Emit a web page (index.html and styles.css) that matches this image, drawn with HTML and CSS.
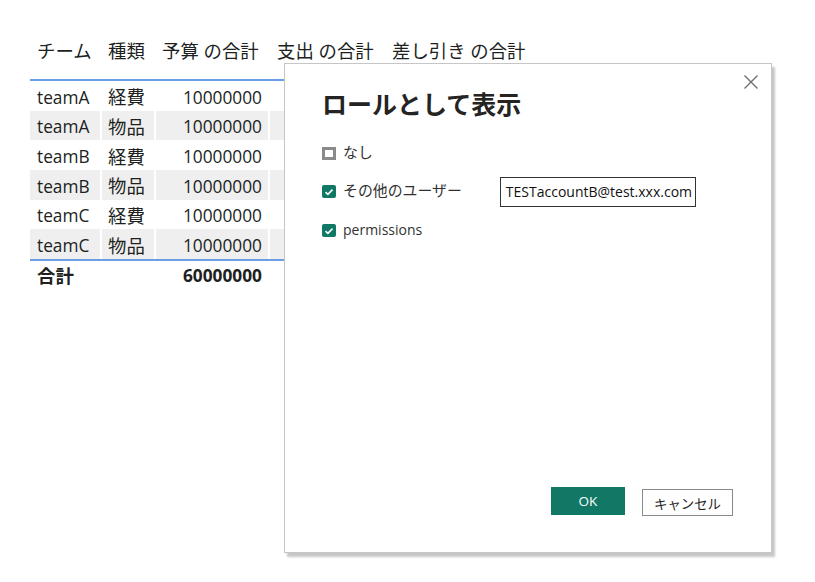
FILE: index.html
```html
<!DOCTYPE html>
<html lang="ja">
<head>
<meta charset="utf-8">
<title>ロールとして表示</title>
<link rel="stylesheet" href="styles.css">
</head>
<body>
<div class="page">
  <div class="matrix">
    <div class="row head">
      <div class="c c1 ja">チーム</div>
      <div class="c c2 ja">種類</div>
      <div class="c c3 ja">予算 の合計</div>
      <div class="c c4 ja">支出 の合計</div>
      <div class="c c5 ja">差し引き の合計</div>
    </div>
    <div class="body">
      <div class="row"><div class="c c1">teamA</div><div class="c c2 ja">経費</div><div class="c c3 num">10000000</div><div class="c c4"></div><div class="c c5"></div></div>
      <div class="row alt"><div class="c c1">teamA</div><div class="c c2 ja">物品</div><div class="c c3 num">10000000</div><div class="c c4"></div><div class="c c5"></div></div>
      <div class="row"><div class="c c1">teamB</div><div class="c c2 ja">経費</div><div class="c c3 num">10000000</div><div class="c c4"></div><div class="c c5"></div></div>
      <div class="row alt"><div class="c c1">teamB</div><div class="c c2 ja">物品</div><div class="c c3 num">10000000</div><div class="c c4"></div><div class="c c5"></div></div>
      <div class="row"><div class="c c1">teamC</div><div class="c c2 ja">経費</div><div class="c c3 num">10000000</div><div class="c c4"></div><div class="c c5"></div></div>
      <div class="row alt"><div class="c c1">teamC</div><div class="c c2 ja">物品</div><div class="c c3 num">10000000</div><div class="c c4"></div><div class="c c5"></div></div>
    </div>
    <div class="row total">
      <div class="c c1 ja">合計</div><div class="c c2"></div><div class="c c3 num">60000000</div><div class="c c4"></div><div class="c c5"></div>
    </div>
  </div>

  <div class="dialog">
    <button class="close" aria-label="閉じる">
      <svg width="14" height="14" viewBox="0 0 14 14"><path d="M0.5 0.5 L13.5 13.5 M13.5 0.5 L0.5 13.5" stroke="#6b6b6b" stroke-width="1.3" fill="none"/></svg>
    </button>
    <h1 class="title">ロールとして表示</h1>
    <div class="options">
      <div class="opt">
        <span class="box"></span>
        <span class="lbl ja">なし</span>
      </div>
      <div class="opt">
        <span class="box on"><svg width="10" height="8" viewBox="0 0 10 8"><path d="M1.5 4.2 L3.9 6.3 L8.5 1.6" stroke="#fff" stroke-width="1.6" fill="none"/></svg></span>
        <span class="lbl ja">その他のユーザー</span>
        <div class="field">TESTaccountB@test.xxx.com</div>
      </div>
      <div class="opt">
        <span class="box on"><svg width="10" height="8" viewBox="0 0 10 8"><path d="M1.5 4.2 L3.9 6.3 L8.5 1.6" stroke="#fff" stroke-width="1.6" fill="none"/></svg></span>
        <span class="lbl">permissions</span>
      </div>
    </div>
    <div class="actions">
      <button class="btn primary">OK</button>
      <button class="btn secondary ja">キャンセル</button>
    </div>
  </div>
</div>
</body>
</html>
```

FILE: styles.css
```css
* { box-sizing: border-box; }
html, body { margin: 0; padding: 0; background: #fff; }
body {
  font-family: "Open Sans", "Noto Sans CJK JP", sans-serif;
  color: #201f1e;
  width: 815px;
  height: 582px;
  overflow: hidden;
}
.page {
  position: relative;
  width: 815px;
  height: 582px;
  padding: 36px 0 0 30px;
}

/* matrix table */
.matrix { width: 503px; }
.row {
  display: grid;
  grid-template-columns: 70px 54px 114px 115px 150px;
  height: 29.7px;
  align-items: center;
  font-size: 17.3px;
  line-height: 1;
}
.row .c { height: 100%; display: flex; align-items: center; padding: 3px 7px 0 7px; white-space: nowrap; }
.row .c + .c { border-left: 2px solid #fff; }
.row .c2 { padding-left: 6px; }
.row .c3 { padding-left: 6px; }
.ja { font-size: 18.4px; }
.row .num { justify-content: flex-end; padding-right: 6px; }
.head { height: 45px; border-bottom: 2px solid #6a9fe4; font-size: 18.4px; }
.head .c { padding: 0 7px 12px 7px; }
.head .c2, .head .c3 { padding-left: 6px; }
.body { border-bottom: 2px solid #6a9fe4; }
.alt { background: #efefef; }
.total { font-weight: 700; height: 30px; }
.total .c { padding-top: 0; }

/* dialog */
.dialog {
  position: absolute;
  left: 284px;
  top: 63px;
  width: 488px;
  height: 490px;
  background: #fff;
  border: 1px solid #c6c6c6;
  box-shadow: 3px 4px 2px rgba(0, 0, 0, 0.22);
  display: flex;
  flex-direction: column;
  padding: 22px 38px 36px 37px;
  color: #323130;
}
.close {
  position: absolute;
  right: 12px;
  top: 10px;
  width: 16px;
  height: 16px;
  padding: 1px;
  border: 0;
  background: transparent;
  display: flex;
}
.title {
  margin: 0;
  font-family: "Noto Sans CJK JP", sans-serif;
  font-size: 25px;
  font-weight: 700;
  line-height: 34px;
  color: #252423;
}
.options {
  margin-top: 18px;
  display: flex;
  flex-direction: column;
  gap: 8.8px;
}
.opt {
  display: flex;
  align-items: center;
  height: 30px;
  font-size: 14px;
}
.opt .ja { font-size: 14.9px; }
.box {
  width: 14px;
  height: 13px;
  border: 3px solid #8a8a8a;
  margin-right: 7px;
  flex: none;
  display: flex;
  align-items: center;
  justify-content: center;
}
.box.on {
  background: #117865;
  border: 0;
  border-radius: 2px;
}
.lbl { line-height: 1; padding-bottom: 2px; }
.field {
  margin-left: 38px;
  width: 196px;
  height: 30px;
  border: 1.5px solid #333;
  font-size: 14px;
  color: #111;
  display: flex;
  align-items: center;
  padding: 0 0 1px 5px;
  white-space: nowrap;
}
.actions {
  margin-top: auto;
  display: flex;
  justify-content: flex-end;
  align-items: center;
  gap: 17px;
}
.btn {
  font-family: "Open Sans", "Noto Sans CJK JP", sans-serif;
  margin: 0;
  padding: 0;
  display: flex;
  align-items: center;
  justify-content: center;
}
.primary {
  width: 74px;
  height: 28px;
  background: #117865;
  color: #fff;
  border: 0;
  font-size: 13.5px;
}
.secondary {
  width: 91px;
  height: 27px;
  background: #fff;
  color: #252423;
  border: 1.5px solid #8a8a8a;
  font-size: 13.4px;
  margin-top: 3px;
}
```
